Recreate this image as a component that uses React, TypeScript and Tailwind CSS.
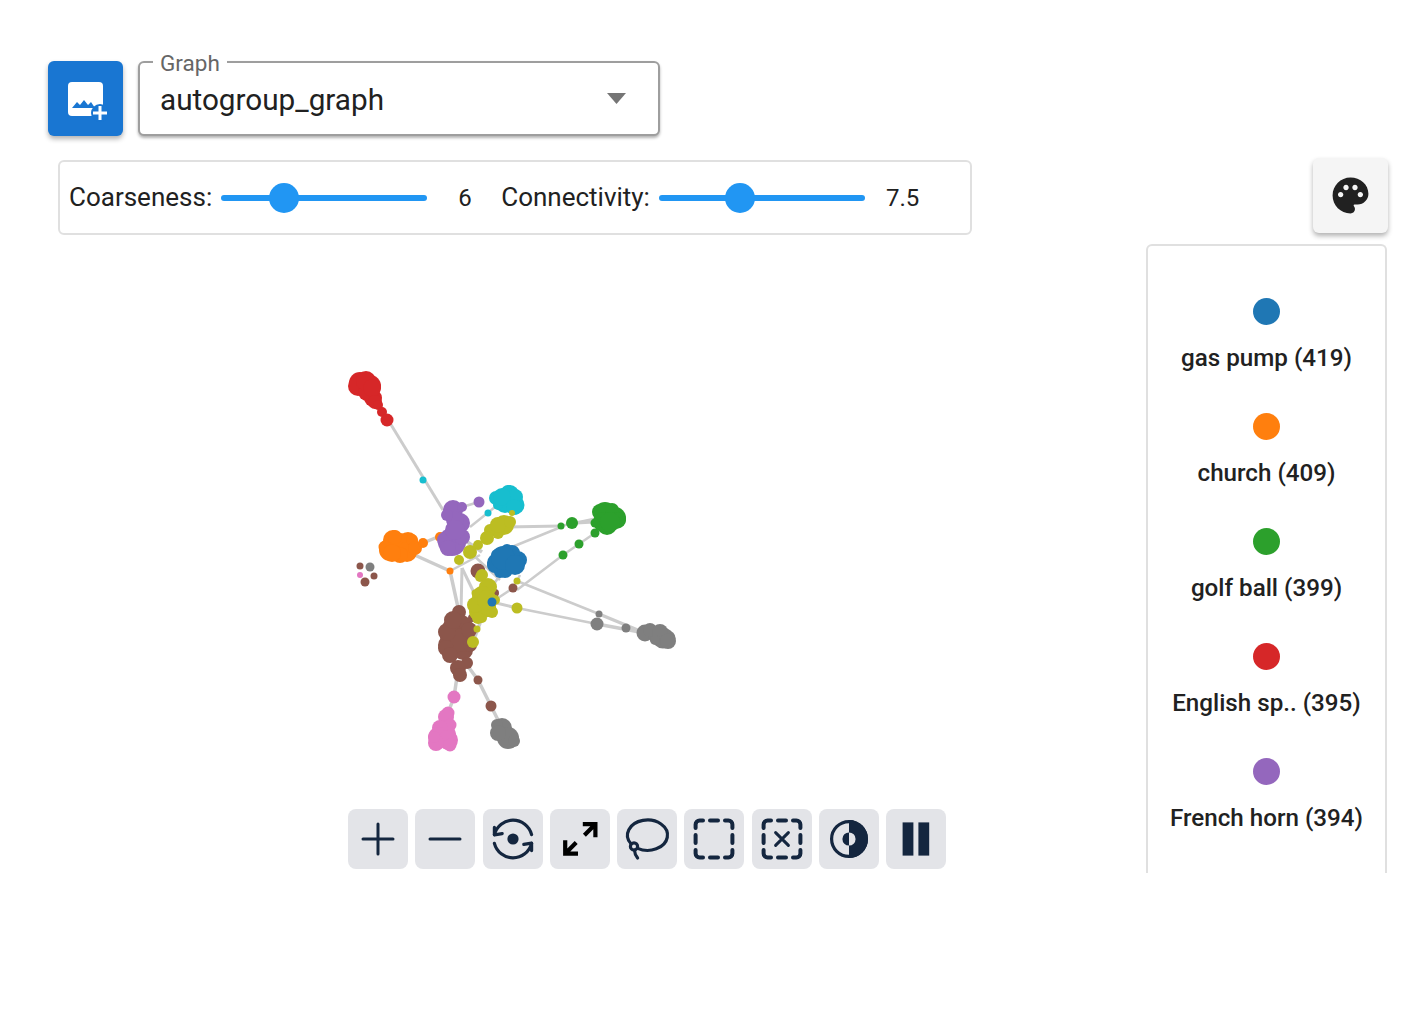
const font = { fontFamily: "Roboto, sans-serif" };

type N = [number, number, number];
const groups: { c: string; n: N[] }[] = [
  { c: "#8c564b", n: [[478,571,7.5],[513,588,4.5],[459,612,7],[458,630,16],[448,645,10],[463,650,10],[458,668,8],[467,663,6],[458,673,5],[478,680,4.5],[491,706,5.5],[360,566,3.5],[365,582,4.5],[374,576,3.5],[472,618,4],[495,593,4],[452,636,12],[462,640,12],[447,632,9],[469,630,8],[470,645,7],[446,648,8],[450,655,8],[453,620,9],[460,675,7]] },
  { c: "#e377c2", n: [[360,575,3],[454,697,6.5],[448,713,6.5],[446,717,8],[450,725,6.5],[445,735,11],[440,728,8],[438,737,10],[448,740,10],[436,743,8],[450,745,6.5],[434,737,6]] },
  { c: "#7f7f7f", n: [[370,567,4.5],[599,614,3.5],[597,624,6.5],[626,628,4.5],[645,633,8.5],[657,635,9],[663,638,10.5],[668,638,7.5],[650,630,7],[660,632,8],[668,641,8],[655,640,5],[502,728,10],[508,738,11],[497,725,6],[498,733,8],[514,741,6]] },
  { c: "#d62728", n: [[360,383,11],[370,386,11],[364,388,9],[373,398,9],[358,386,10],[367,392,9],[366,381,10],[372,388,9],[375,402,7],[378,405,5],[382,412,5],[387,420,6.5]] },
  { c: "#17becf", n: [[423,480,3.5],[488,513,3.5],[496,498,7],[510,494,9],[515,505,9.5],[505,503,10],[498,505,5],[508,492,7],[515,497,8],[502,497,9],[514,507,8]] },
  { c: "#ff7f0e", n: [[393,540,10],[408,542,10],[390,550,11],[400,545,12],[407,552,10],[385,547,6.5],[395,537,7],[412,540,6],[400,555,8],[415,548,7],[392,553,9],[423,543,5],[440,537,5],[450,571,3.5]] },
  { c: "#9467bd", n: [[453,510,10],[462,507,5],[460,523,10],[452,542,14],[462,537,8],[455,520,9],[447,515,6],[445,540,8],[455,530,10],[448,548,8],[479,502,5.5],[459,560,3.5]] },
  { c: "#2ca02c", n: [[605,513,11],[615,518,11],[607,525,10],[600,512,8],[612,510,7],[618,520,8],[603,522,10],[610,522,10],[595,523,4.5],[572,523,6],[561,526,3.5],[595,533,4.5],[579,544,4.5],[563,555,4.5]] },
  { c: "#1f77b4", n: [[507,562,13],[518,560,9],[497,563,10],[500,572,6],[507,550,6],[497,555,6],[495,565,8],[505,570,8],[512,553,8],[503,558,12],[515,565,10]] },
  { c: "#bcbd22", n: [[504,525,10],[498,533,6],[490,530,6],[498,525,8],[510,522,6],[487,538,7],[478,545,5],[470,552,7],[512,513,3],[480,577,5],[488,587,9],[475,593,3.5],[483,605,13],[477,612,8],[482,618,5],[488,608,8],[482,596,10],[475,605,8],[492,612,6],[478,618,6],[495,600,5],[482,575,6],[487,600,10],[477,629,3.5],[473,642,6],[517,581,3.5],[517,608,5.5],[459,560,5]] },
  { c: "#1f77b4", n: [[492,602,4.5]] },
];

const edges: [number, number, number, number, number][] = [
  [390,423,443,510,3],[462,507,479,502,2.5],[470,527,495,507,2.5],[505,527,561,526,3],[561,526,607,516,2.5],[572,523,607,521,3.5],
  [512,547,561,527,2.5],[517,590,563,555,2.5],[563,555,579,544,2.5],[579,544,595,533,2.5],
  [423,543,450,532,3.5],[408,552,450,571,3.5],[450,571,459,612,3.5],[450,571,480,555,2.5],[462,568,461,612,3],[462,568,480,605,3],
  [517,581,599,614,2.5],[599,614,645,633,3.5],[517,608,597,624,2.5],[597,624,645,633,3.5],[492,602,517,608,3],[492,602,513,588,2.5],[500,575,490,590,2.5],
  [458,670,454,697,3.5],[454,697,448,713,3.5],[467,665,478,680,3.5],[478,680,491,706,3.5],[491,706,502,728,3.5],[520,575,517,581,2.5],[450,530,482,552,3.5],[470,552,500,580,2.5],[473,642,485,610,3.5],
];

function Graph() {
  return (
    <svg viewBox="340 360 350 400" className="block w-[350px] h-[400px] ml-[292px] mt-[125px] blur-[0.4px]">
      {edges.map(([a, b, c, d, w], i) => (
        <line key={i} x1={a} y1={b} x2={c} y2={d} stroke="#cccccc" strokeWidth={w} />
      ))}
      {groups.map((g, i) => (
        <g key={i} fill={g.c}>
          {g.n.map(([x, y, r], j) => (
            <circle key={j} cx={x} cy={y} r={r} />
          ))}
        </g>
      ))}
    </svg>
  );
}

function Slider({ thumb }: { thumb: string }) {
  return (
    <div className="relative w-[206px] h-[6px] rounded-full bg-[#2196f3]">
      <div className={`absolute top-[-12px] w-[30px] h-[30px] rounded-full bg-[#2196f3] ${thumb}`} />
    </div>
  );
}

const ic = { fill: "none", stroke: "#14263f", strokeLinecap: "round" as const, strokeLinejoin: "round" as const };

function DashedBox() {
  return (
    <path
      strokeWidth={2}
      d="M2.8 6.5V4.8a2 2 0 0 1 2-2h1.7M10 2.8h4M17.5 2.8h1.7a2 2 0 0 1 2 2v1.7M21.2 10v4M21.2 17.5v1.7a2 2 0 0 1-2 2h-1.7M14 21.2h-4M6.5 21.2h-1.7a2 2 0 0 1-2-2v-1.7M2.8 14v-4"
    />
  );
}

const tools = [
  <path key="p" strokeWidth={1.5} d="M12 4.5v15m7.5-7.5h-15" />,
  <path key="m" strokeWidth={1.5} d="M19.5 12h-15" />,
  <g key="r" strokeWidth={1.6}>
    <path d="M2.7 9.8A9.6 9.6 0 0 1 21.3 9.8" />
    <path d="M2.7 6.2V9.9L6.6 9.3" />
    <path d="M21.3 14.2A9.6 9.6 0 0 1 2.7 14.2" />
    <path d="M21.3 17.8V14.1L17.4 14.7" />
    <circle cx="12" cy="12" r="2.8" fill="#14263f" stroke="none" />
  </g>,
  <path key="e" strokeWidth={2.1} strokeLinecap="butt" strokeLinejoin="miter" d="M13.4 4.6h6.3v6.5M19.5 4.8l-5.3 5.3M4.6 12.6v6.7h6.4M4.8 19.1l5.3-5.3" stroke="#000" />,
  <g key="l" strokeWidth={1.6}>
    <path d="M4 14.4A10 7.6 0 1 1 7.3 16.7" />
    <circle cx="5.5" cy="15.7" r="1.8" />
    <path d="M5.7 17.5C5.8 19 6.5 20.5 7.3 21.5" />
  </g>,
  <DashedBox key="s" />,
  <g key="x">
    <DashedBox />
    <path strokeWidth={1.5} d="M8.8 8.8l6.4 6.4M15.2 8.8l-6.4 6.4" />
  </g>,
  <g key="c">
    <circle cx="12" cy="12" r="8.7" strokeWidth={1.6} />
    <path d="M12 2.5a9.5 9.5 0 0 1 0 19z" fill="#14263f" stroke="none" />
    <path d="M12 8.7a3.3 3.3 0 0 0 0 6.6z" fill="#14263f" stroke="none" />
    <path d="M12 8.7a3.3 3.3 0 0 1 0 6.6z" fill="#e3e4e8" stroke="none" />
  </g>,
  <g key="a" fill="#14263f" stroke="none">
    <rect x="5.3" y="3.7" width="5.4" height="16.6" />
    <rect x="13.2" y="3.7" width="5.4" height="16.6" />
  </g>,
];

const legend: [string, string][] = [
  ["#1f77b4", "gas pump (419)"],
  ["#ff7f0e", "church (409)"],
  ["#2ca02c", "golf ball (399)"],
  ["#d62728", "English sp.. (395)"],
  ["#9467bd", "French horn (394)"],
];

export default function App() {
  return (
    <div className="flex justify-between items-start h-[1014px] bg-white text-[#212121] overflow-hidden" style={font}>
      <div className="pt-[61px] pl-[48px]">
        <div className="flex gap-[15px]">
          <button className="w-[75px] h-[75px] rounded-[6px] bg-[#1976d2] shadow-[0_3px_5px_rgba(0,0,0,0.3)] flex items-center justify-center">
            <svg viewBox="0 0 75 75" className="w-[75px] h-[75px]">
              <rect x="20" y="21" width="35" height="34" rx="4" fill="#fff" />
              <path d="M24 47l5-6 3 3 4-5 4 5 3-3 4 6z" fill="#1976d2" />
              <circle cx="52" cy="52" r="9" fill="#1976d2" />
              <path d="M52 45v14M45 52h14" stroke="#fff" strokeWidth="3" />
            </svg>
          </button>
          <div className="relative w-[522px] h-[75px] rounded-[6px] border-2 border-[#9e9e9e] shadow-[0_2px_3px_rgba(0,0,0,0.3)] flex items-center justify-between pl-[20px] pr-[32px] bg-white">
            <span className="absolute left-[13px] top-[-13px] px-[7px] bg-white text-[22.5px] leading-[26px] text-[#666666]">Graph</span>
            <span className="text-[29.7px] leading-[36px] mt-[2px]">autogroup_graph</span>
            <svg viewBox="0 0 19 11" className="w-[19px] h-[11px]">
              <path d="M0 0h19L9.5 11z" fill="#757575" />
            </svg>
          </div>
        </div>
        <div className="mt-[24px] ml-[10px] w-[914px] h-[75px] rounded-[6px] border-2 border-[#e0e0e0] flex items-center pl-[9px] text-[26px]">
          <span>Coarseness:</span>
          <div className="ml-[9px]"><Slider thumb="left-[48px]" /></div>
          <span className="ml-[31px] w-[12px] text-[24px]">6</span>
          <span className="ml-[31px]">Connectivity:</span>
          <div className="ml-[9px]"><Slider thumb="left-[66px]" /></div>
          <span className="ml-[21px] text-[24px]">7.5</span>
        </div>
        <Graph />
        <div className="mt-[49px] ml-[300px] flex gap-[7.3px]">
          {tools.map((t, i) => (
            <button key={i} className="w-[60px] h-[60px] rounded-[8px] bg-[#e3e4e8] flex items-center justify-center">
              <svg viewBox="0 0 24 24" className="w-12 h-12" {...ic}>{t}</svg>
            </button>
          ))}
        </div>
      </div>
      <div className="mt-[158px] mr-[33px] w-[243px] flex flex-col items-end">
        <button className="w-[75px] h-[75px] rounded-[6px] bg-[#f5f5f5] shadow-[0_3px_5px_rgba(0,0,0,0.3)] flex items-center justify-center">
          <svg viewBox="0 0 24 24" className="w-[43px] h-[43px]" fill="#212121">
            <path d="M12 2C6.49 2 2 6.49 2 12s4.49 10 10 10c1.38 0 2.5-1.12 2.5-2.5 0-.61-.23-1.2-.64-1.67-.08-.1-.13-.21-.13-.33 0-.28.22-.5.5-.5H16c3.31 0 6-2.69 6-6 0-4.96-4.49-9-10-9zm5.5 11c-.83 0-1.5-.67-1.5-1.5s.67-1.5 1.5-1.5 1.5.67 1.5 1.5-.67 1.5-1.5 1.5zm-3-4c-.83 0-1.5-.67-1.5-1.5S13.67 6 14.5 6s1.5.67 1.5 1.5S15.33 9 14.5 9zM5 11.5c0-.83.67-1.5 1.5-1.5s1.5.67 1.5 1.5S7.33 13 6.5 13 5 12.33 5 11.5zm6-4c0 .83-.67 1.5-1.5 1.5S8 8.33 8 7.5 8.67 6 9.5 6s1.5.67 1.5 1.5z" />
          </svg>
        </button>
        <div className="mt-[11px] mr-[1px] w-[241px] h-[629px] rounded-t-[6px] border-2 border-b-0 border-[#e0e0e0] overflow-hidden flex flex-col items-center pt-[51.5px]">
          {legend.map(([c, t]) => (
            <div key={t} className="h-[115px] shrink-0 flex flex-col items-center">
              <div className="w-[27px] h-[27px] rounded-full" style={{ backgroundColor: c }} />
              <div className="mt-[17px] text-[24.2px] leading-[32px] font-medium whitespace-nowrap">{t}</div>
            </div>
          ))}
        </div>
      </div>
    </div>
  );
}
